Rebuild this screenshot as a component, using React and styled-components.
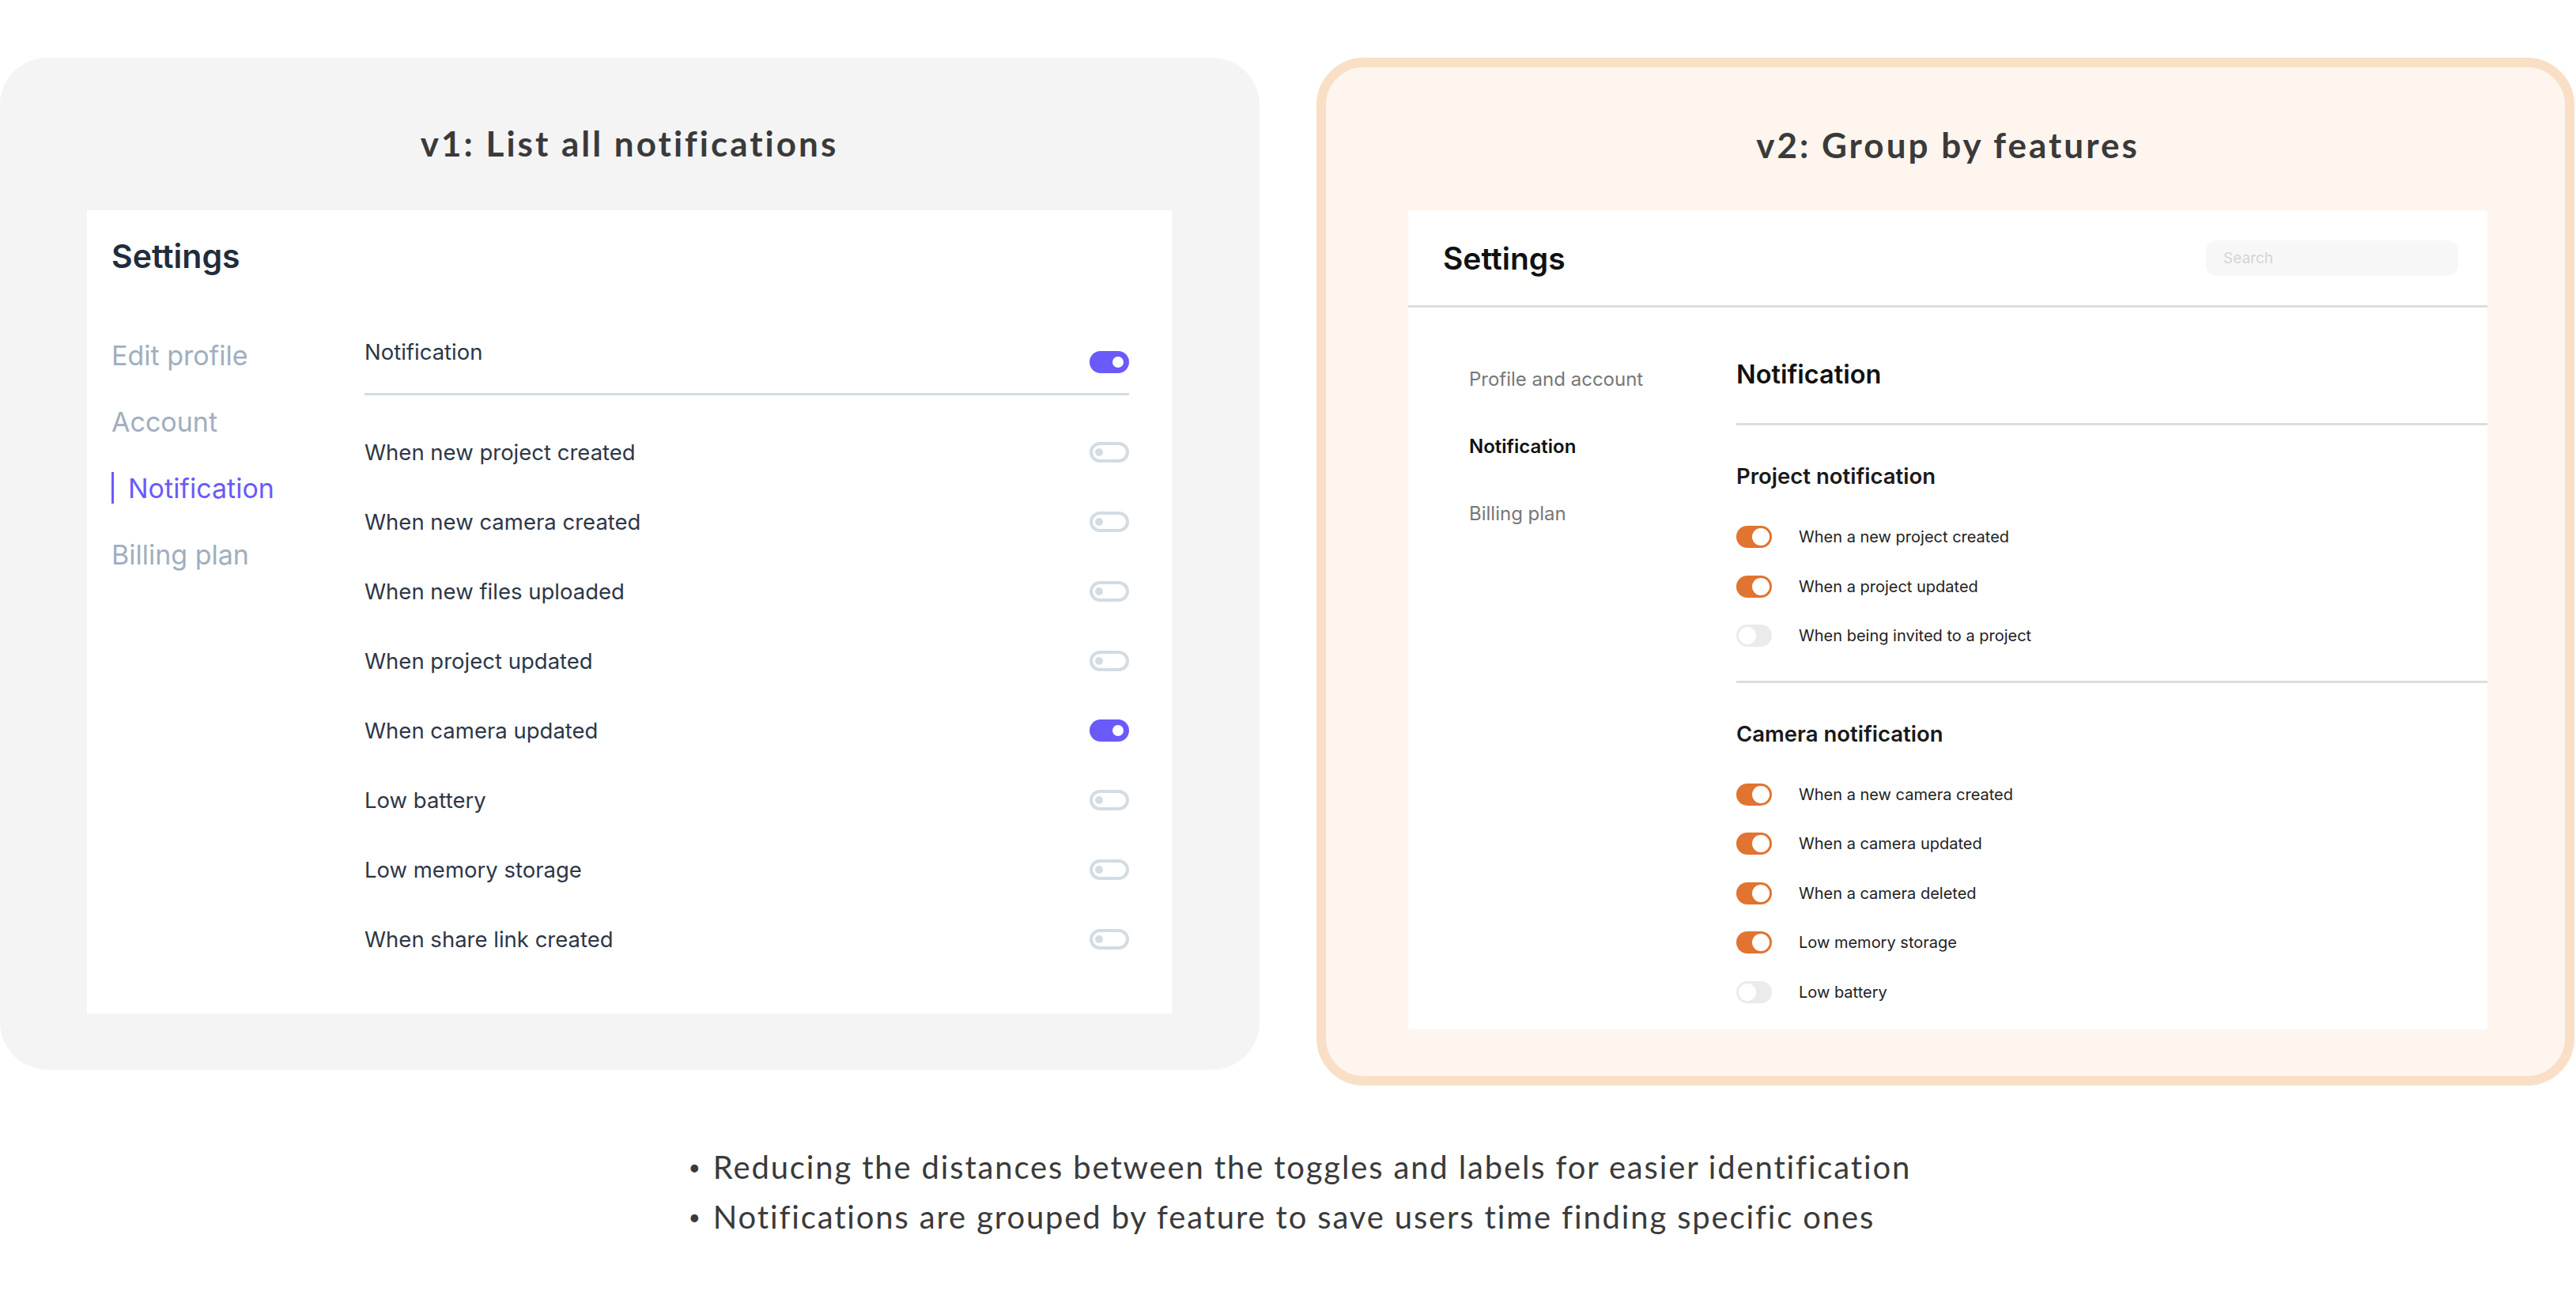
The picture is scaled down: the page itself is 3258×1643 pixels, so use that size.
import React from 'react';
import styled, { createGlobalStyle, css } from 'styled-components';

const GlobalStyle = createGlobalStyle`
  html, body {
    margin: 0;
    padding: 0;
    background: #ffffff;
  }

  body {
    font-family: Inter, "Noto Sans", sans-serif;
    -webkit-font-smoothing: antialiased;
  }
`;

const V1_ITEMS = [
  { label: 'When new project created', on: false },
  { label: 'When new camera created', on: false },
  { label: 'When new files uploaded', on: false },
  { label: 'When project updated', on: false },
  { label: 'When camera updated', on: true },
  { label: 'Low battery', on: false },
  { label: 'Low memory storage', on: false },
  { label: 'When share link created', on: false },
];

const V2_GROUPS = [
  {
    title: 'Project notification',
    items: [
      { label: 'When a new project created', on: true },
      { label: 'When a project updated', on: true },
      { label: 'When being invited to a project', on: false },
    ],
  },
  {
    title: 'Camera notification',
    items: [
      { label: 'When a new camera created', on: true },
      { label: 'When a camera updated', on: true },
      { label: 'When a camera deleted', on: true },
      { label: 'Low memory storage', on: true },
      { label: 'Low battery', on: false },
    ],
  },
];

export default function App() {
  return (
    <>
      <GlobalStyle />
      <Page>
        <Cards>
          <Card>
            <CardTitle>v1: List all notifications</CardTitle>
            <V1Panel>
              <V1Heading>Settings</V1Heading>
              <V1Body>
                <V1Nav>
                  <V1NavItem>Edit profile</V1NavItem>
                  <V1NavItem>Account</V1NavItem>
                  <V1NavItem $active>Notification</V1NavItem>
                  <V1NavItem>Billing plan</V1NavItem>
                </V1Nav>
                <div>
                  <V1MasterRow>
                    <V1Label>Notification</V1Label>
                    <Toggle $on $master />
                  </V1MasterRow>
                  <V1List>
                    {V1_ITEMS.map((item) => (
                      <V1Row key={item.label}>
                        <V1Label>{item.label}</V1Label>
                        <Toggle $on={item.on} />
                      </V1Row>
                    ))}
                  </V1List>
                </div>
              </V1Body>
            </V1Panel>
          </Card>

          <Card $accent>
            <CardTitle $accent>v2: Group by features</CardTitle>
            <V2Panel>
              <V2Header>
                <V2Heading>Settings</V2Heading>
                <Search placeholder="Search" />
              </V2Header>
              <V2Body>
                <V2Nav>
                  <V2NavItem>Profile and account</V2NavItem>
                  <V2NavItem $active>Notification</V2NavItem>
                  <V2NavItem>Billing plan</V2NavItem>
                </V2Nav>
                <div>
                  <V2Title>Notification</V2Title>
                  {V2_GROUPS.map((group) => (
                    <Group key={group.title}>
                      <GroupTitle>{group.title}</GroupTitle>
                      <GroupList>
                        {group.items.map((item) => (
                          <V2Row key={item.label}>
                            <Toggle $v2 $on={item.on} />
                            <V2Label>{item.label}</V2Label>
                          </V2Row>
                        ))}
                      </GroupList>
                    </Group>
                  ))}
                </div>
              </V2Body>
            </V2Panel>
          </Card>
        </Cards>

        <Notes>
          <Note>Reducing the distances between the toggles and labels for easier identification</Note>
          <Note>Notifications are grouped by feature to save users time finding specific ones</Note>
        </Notes>
      </Page>
    </>
  );
}

const Page = styled.div`
  width: 3258px;
  padding-top: 73px;
  padding-bottom: 80px;
`;

const Cards = styled.div`
  display: flex;
  align-items: flex-start;
  gap: 72px;
`;

const Card = styled.section`
  box-sizing: border-box;
  width: 1593px;
  background: #f4f4f4;
  border-radius: 60px;
  padding: 80px 111px 71px 110px;

  ${(p) => p.$accent && css`
    width: 1591px;
    background: #fef5ef;
    border: 12px solid #f9dfc6;
    padding: 70px 98px 59px 104px;
  `}
`;

const CardTitle = styled.h1`
  margin: 0 0 ${(p) => (p.$accent ? 55 : 57)}px;
  font-family: Lato, "Open Sans", sans-serif;
  font-weight: 700;
  font-size: 44px;
  line-height: 56px;
  letter-spacing: 3px;
  text-align: center;
  color: #3a3a3a;
`;

/* ---------- v1 ---------- */

const V1Panel = styled.div`
  background: #ffffff;
  padding: 33px 54px 50px 31px;
  color: #2d3748;
`;

const V1Heading = styled.h2`
  margin: 0;
  font-size: 41px;
  line-height: 50px;
  font-weight: 600;
  color: #1f2d3d;
`;

const V1Body = styled.div`
  display: grid;
  grid-template-columns: 320px 1fr;
`;

const V1Nav = styled.nav`
  display: flex;
  flex-direction: column;
  padding-top: 58px;
`;

const V1NavItem = styled.div`
  height: 84px;
  display: flex;
  align-items: center;
  font-size: 34px;
  color: #a0aec0;

  ${(p) => p.$active && css`
    color: #6a5af9;
    &::before {
      content: "";
      width: 3px;
      height: 40px;
      margin-right: 18px;
      background: #6a5af9;
    }
  `}
`;

const V1Label = styled.span`
  font-size: 27.5px;
  line-height: 36px;
  color: #2d3748;
`;

const V1MasterRow = styled.div`
  display: flex;
  justify-content: space-between;
  align-items: flex-start;
  padding-top: 78px;
  padding-bottom: 25px;
  border-bottom: 3px solid #d3dbe3;
`;

const V1List = styled.div`
  margin-top: 28px;
`;

const V1Row = styled.div`
  height: 88px;
  display: flex;
  align-items: center;
  justify-content: space-between;
`;

/* ---------- toggle ---------- */

const Toggle = styled.span`
  position: relative;
  flex: none;
  box-sizing: border-box;
  display: inline-block;
  width: 50px;
  height: 26px;
  border-radius: 14px;
  border: 4px solid #d3dce4;
  background: #ffffff;
  margin-top: ${(p) => (p.$master ? 17 : 0)}px;

  &::after {
    content: "";
    position: absolute;
    top: 4px;
    left: 3px;
    width: 10px;
    height: 10px;
    border-radius: 50%;
    background: #d3dce4;
  }

  ${(p) => !p.$v2 && p.$on && css`
    height: 28px;
    border: none;
    background: #6a5af9;
    &::after {
      top: 7px;
      left: auto;
      right: 7px;
      width: 14px;
      height: 14px;
      background: #ffffff;
    }
  `}

  ${(p) => p.$v2 && css`
    width: 45px;
    height: 28px;
    border: none;
    background: ${p.$on ? '#e07430' : '#ebebeb'};
    &::after {
      top: 3px;
      left: ${p.$on ? 'auto' : '3px'};
      right: ${p.$on ? '3px' : 'auto'};
      width: 22px;
      height: 22px;
      background: #ffffff;
    }
  `}
`;

/* ---------- v2 ---------- */

const V2Panel = styled.div`
  background: #ffffff;
  padding-bottom: 16px;
  color: #1c1c1c;
`;

const V2Header = styled.header`
  height: 120px;
  display: flex;
  align-items: center;
  justify-content: space-between;
  padding: 0 37px 0 44px;
  border-bottom: 3px solid #dddddd;
`;

const V2Heading = styled.h2`
  margin: 0;
  font-size: 39px;
  font-weight: 600;
  color: #111111;
`;

const Search = styled.input`
  box-sizing: border-box;
  width: 319px;
  height: 45px;
  border: none;
  outline: none;
  border-radius: 14px;
  background: #f7f7f7;
  padding: 0 22px;
  font-family: Inter, sans-serif;
  font-size: 19px;

  &::placeholder {
    color: #d4d4d4;
  }
`;

const V2Body = styled.div`
  display: grid;
  grid-template-columns: 338px 1fr;
  padding-left: 77px;
`;

const V2Nav = styled.nav`
  display: flex;
  flex-direction: column;
  padding-top: 48px;
`;

const V2NavItem = styled.div`
  height: 85px;
  display: flex;
  align-items: center;
  font-size: 24px;
  color: ${(p) => (p.$active ? '#111111' : '#777777')};
  font-weight: ${(p) => (p.$active ? 600 : 400)};
`;

const V2Title = styled.h3`
  margin: 0;
  padding: 65px 0 41px;
  font-size: 32.5px;
  line-height: 40px;
  font-weight: 600;
  color: #111111;
  border-bottom: 3px solid #dddddd;
`;

const Group = styled.div`
  padding: 47px 0 25px;
  border-bottom: 3px solid #dddddd;

  &:last-child {
    border-bottom: none;
    padding-bottom: 0;
  }
`;

const GroupTitle = styled.h4`
  margin: 0;
  font-size: 27.5px;
  line-height: 34px;
  font-weight: 600;
  color: #1a1a1a;
`;

const GroupList = styled.div`
  margin-top: 29px;
`;

const V2Row = styled.div`
  height: 62.5px;
  display: flex;
  align-items: center;
  gap: 34px;
`;

const V2Label = styled.span`
  font-size: 20px;
  color: #222222;
`;

/* ---------- notes ---------- */

const Notes = styled.ul`
  width: fit-content;
  margin: 72px auto 0;
  padding: 0 0 0 30px;
  list-style: none;
  font-family: Lato, "Open Sans", sans-serif;
  font-size: 40px;
  line-height: 63px;
  letter-spacing: 1.85px;
  color: #3a3a3a;
`;

const Note = styled.li`
  display: flex;
  align-items: center;

  &::before {
    content: "•";
    width: 31px;
    font-size: 26px;
  }
`;
